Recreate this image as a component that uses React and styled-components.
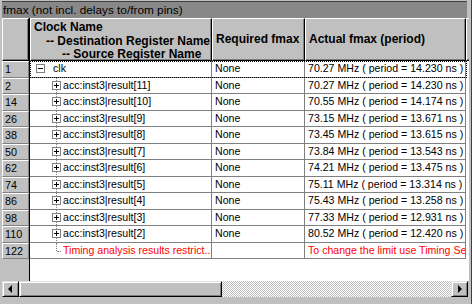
import React from "react";
import styled, { createGlobalStyle } from "styled-components";

const Global = createGlobalStyle`
  html, body { margin: 0; padding: 0; background: #c0c0c0; }
  body { font-family: "Liberation Sans", Arial, sans-serif; }
  * { box-sizing: border-box; }
`;

const COLS = "27px 1px 182px 93px 161px 1fr";

const Window = styled.div`
  width: 472px;
  height: 304px;
  background: #c0c0c0;
  display: flex;
  flex-direction: column;
  padding: 1px 2px 7px 2px;
  border-right: 1px solid #404040;
  overflow: hidden;
`;

const TitleBar = styled.div`
  height: 17px;
  flex: none;
  background: #888;
  border-top: 1px solid #404040;
  margin-right: 2px;
  color: #000;
  font-size: 11.8px;
  line-height: 16px;
  padding-left: 1px;
  white-space: nowrap;
`;

const Grid = styled.div`
  flex: 1;
  display: flex;
  flex-direction: column;
  background: #fff;
  overflow: hidden;
  position: relative;
`;

const HeaderRow = styled.div`
  display: grid;
  grid-template-columns: ${COLS};
  height: 43px;
  flex: none;
  background: #c0c0c0;
`;

const HeadCell = styled.div`
  border-top: 1px solid #fff;
  border-left: 1px solid #fff;
  border-right: 1px solid #000;
  border-bottom: 1px solid #000;
  box-shadow: inset -1px -1px 0 #808080;
  font-weight: bold;
  font-size: 12px;
  line-height: 13.5px;
  padding: ${(p) => (p.$center ? "0 0 0 3px" : "2px 0 0 3px")};
  white-space: nowrap;
  overflow: hidden;
  display: flex;
  flex-direction: column;
  justify-content: ${(p) => (p.$center ? "center" : "flex-start")};
`;

const Divider = styled.div`
  background: #000;
`;

const HeadLine = styled.span`
  padding-left: ${(p) => p.$indent || 0}px;
`;

const Row = styled.div`
  display: grid;
  grid-template-columns: ${COLS};
  height: 16.5px;
  flex: none;
  position: relative;
`;

const NumCell = styled.div`
  background: #c0c0c0;
  border-top: 1px solid #fff;
  border-left: 1px solid #fff;
  border-right: 1px solid #808080;
  border-bottom: 1px solid #808080;
  font-size: 10.8px;
  line-height: 14px;
  padding-left: 2px;
  color: #000;
`;

const Cell = styled.div`
  border-right: ${(p) => (p.$open ? "none" : "1px solid #808080")};
  border-bottom: ${(p) => (p.$open ? "none" : "1px solid #808080")};
  font-size: 10.6px;
  line-height: 15px;
  padding-left: ${(p) => p.$pad || 3}px;
  color: ${(p) => (p.$red ? "#ff0000" : "#000")};
  white-space: nowrap;
  overflow: hidden;
  display: flex;
  align-items: center;
  position: relative;
`;

const Focus = styled.div`
  position: absolute;
  left: 28px;
  top: 0;
  right: 2px;
  bottom: 0;
  border: 1px dotted #000;
  pointer-events: none;
`;

const Filler = styled.div`
  flex: 1;
  display: grid;
  grid-template-columns: 27px 1px 1fr;
`;

const FillNum = styled.div`
  background: #c0c0c0;
`;

const Box = styled.span`
  width: 9px;
  height: 9px;
  border: 1px solid #808080;
  background: #fff;
  position: relative;
  flex: none;
  margin-right: ${(p) => p.$gap}px;
  &::before {
    content: "";
    position: absolute;
    left: 1px;
    top: 3px;
    width: 5px;
    height: 1px;
    background: #000;
  }
  &::after {
    content: "";
    display: ${(p) => (p.$plus ? "block" : "none")};
    position: absolute;
    left: 3px;
    top: 1px;
    width: 1px;
    height: 5px;
    background: #000;
  }
`;

const VLine = styled.span`
  position: absolute;
  left: 26px;
  top: 0;
  height: ${(p) => (p.$last ? 8 : 17)}px;
  border-left: 1px dotted #808080;
`;

const HLine = styled.span`
  position: absolute;
  left: 27px;
  top: 8px;
  width: 4px;
  border-top: 1px dotted #808080;
`;

const ScrollBar = styled.div`
  height: 16px;
  flex: none;
  display: flex;
  margin-right: 1px;
`;

const ArrowBtn = styled.div`
  width: 17px;
  height: 16px;
  background: #c0c0c0;
  border-top: 1px solid #dfdfdf;
  border-left: 1px solid #dfdfdf;
  border-right: 1px solid #000;
  border-bottom: 1px solid #000;
  box-shadow: inset 1px 1px 0 #fff, inset -1px -1px 0 #808080;
  display: flex;
  align-items: center;
  justify-content: center;
  flex: none;
`;

const Thumb = styled(ArrowBtn)`
  width: 203px;
`;

const Track = styled.div`
  flex: 1;
  background-color: #fff;
  background-image: repeating-conic-gradient(#c0c0c0 0 25%, #fff 0 50%);
  background-size: 2px 2px;
`;

const Tri = styled.span`
  width: 0;
  height: 0;
  border-top: 4px solid transparent;
  border-bottom: 4px solid transparent;
  ${(p) =>
    p.$dir === "left"
      ? "border-right: 4px solid #000; margin-left: -2px;"
      : "border-left: 4px solid #000; margin-left: 1px;"}
`;

const rows = [
  ["2", "acc:inst3|result[11]", "70.27 MHz ( period = 14.230 ns )"],
  ["14", "acc:inst3|result[10]", "70.55 MHz ( period = 14.174 ns )"],
  ["26", "acc:inst3|result[9]", "73.15 MHz ( period = 13.671 ns )"],
  ["38", "acc:inst3|result[8]", "73.45 MHz ( period = 13.615 ns )"],
  ["50", "acc:inst3|result[7]", "73.84 MHz ( period = 13.543 ns )"],
  ["62", "acc:inst3|result[6]", "74.21 MHz ( period = 13.475 ns )"],
  ["74", "acc:inst3|result[5]", "75.11 MHz ( period = 13.314 ns )"],
  ["86", "acc:inst3|result[4]", "75.43 MHz ( period = 13.258 ns )"],
  ["98", "acc:inst3|result[3]", "77.33 MHz ( period = 12.931 ns )"],
  ["110", "acc:inst3|result[2]", "80.52 MHz ( period = 12.420 ns )"],
];

export default function App() {
  return (
    <>
      <Global />
      <Window>
        <TitleBar>fmax (not incl. delays to/from pins)</TitleBar>
        <Grid>
          <HeaderRow>
            <HeadCell />
            <Divider />
            <HeadCell>
              <HeadLine>Clock Name</HeadLine>
              <HeadLine $indent={12}>-- Destination Register Name</HeadLine>
              <HeadLine $indent={28}>-- Source Register Name</HeadLine>
            </HeadCell>
            <HeadCell $center>Required fmax</HeadCell>
            <HeadCell $center>Actual fmax (period)</HeadCell>
            <HeadCell />
          </HeaderRow>

          <Row>
            <NumCell>1</NumCell>
            <Divider />
            <Cell $pad={6}>
              <Box $gap={8} />
              clk
            </Cell>
            <Cell>None</Cell>
            <Cell>70.27 MHz ( period = 14.230 ns )</Cell>
            <Cell $open />
            <Focus />
          </Row>

          {rows.map(([n, name, val]) => (
            <Row key={n}>
              <NumCell>{n}</NumCell>
              <Divider />
              <Cell $pad={22}>
                <VLine />
                <Box $plus $gap={2} />
                {name}
              </Cell>
              <Cell>None</Cell>
              <Cell>{val}</Cell>
              <Cell $open />
            </Row>
          ))}

          <Row>
            <NumCell>122</NumCell>
            <Divider />
            <Cell $pad={33} $red>
              <VLine $last />
              <HLine />
              Timing analysis results restrict...
            </Cell>
            <Cell />
            <Cell $red>To change the limit use Timing Settings</Cell>
            <Cell $open />
          </Row>

          <Filler>
            <FillNum />
            <Divider />
            <div />
          </Filler>
        </Grid>
        <ScrollBar>
          <ArrowBtn>
            <Tri $dir="left" />
          </ArrowBtn>
          <Thumb />
          <Track />
          <ArrowBtn>
            <Tri $dir="right" />
          </ArrowBtn>
        </ScrollBar>
      </Window>
    </>
  );
}
